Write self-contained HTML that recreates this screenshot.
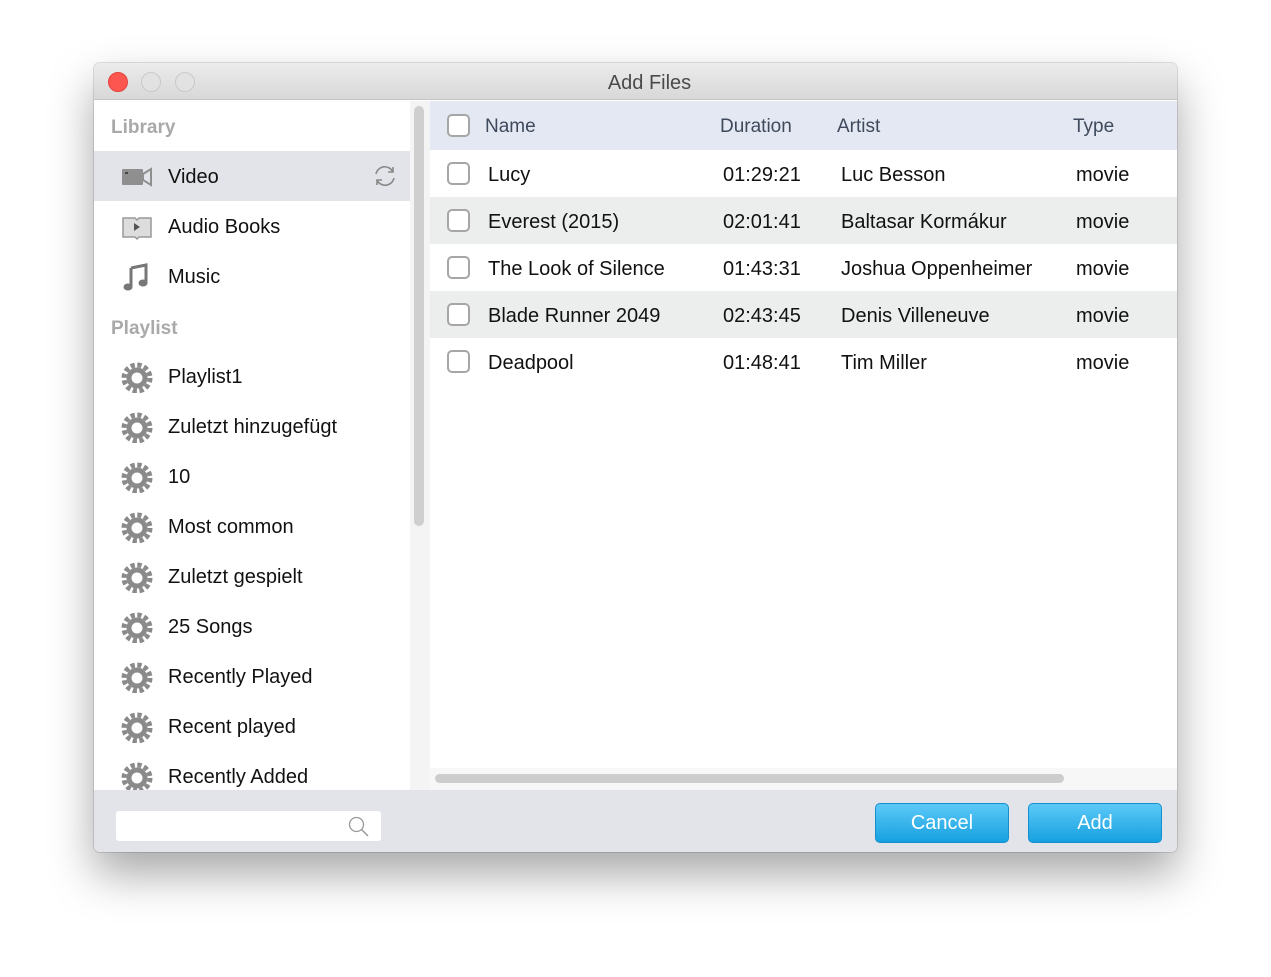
<!DOCTYPE html>
<html><head><style>
*{margin:0;padding:0;box-sizing:border-box}
body{width:1271px;height:977px;background:#fff;font-family:"Liberation Sans",sans-serif;position:relative;overflow:hidden}
.win{position:absolute;left:94px;top:63px;width:1083px;height:789px;border-radius:6px;background:#fff;box-shadow:0 22px 45px rgba(0,0,0,.35),0 0 0 1px rgba(0,0,0,.12);overflow:hidden}
.title{position:absolute;left:0;top:0;width:100%;height:37px;background:linear-gradient(#ececec,#d8d8d8);border-bottom:1px solid #c4c4c4;text-align:center;font-size:20px;line-height:40px;color:#4a4a4a;padding-left:28px}
.dot{position:absolute;top:9px;width:20px;height:20px;border-radius:50%;border:1px solid #c9c9c9;background:#e2e2e2}
.side{position:absolute;left:0;top:38px;width:316px;height:689px;background:#fff}
.sh{position:absolute;left:17px;font-size:19px;font-weight:bold;color:#a9a9a9}
.it{position:absolute;left:0;width:316px;height:50px;font-size:20px;color:#111}
.it span{position:absolute;left:74px;top:15px}
.it svg{position:absolute;left:27px;top:10px}
.sb{position:absolute;left:316px;top:38px;width:20px;height:689px;background:#f4f4f4}
.thumb{position:absolute;left:320px;top:43px;width:10px;height:420px;border-radius:5px;background:#cfcfcf}
.hd{position:absolute;left:336px;top:38px;width:747px;height:49px;background:#e4e8f2;font-size:19px;color:#3e4a5c}
.row{position:absolute;left:336px;width:747px;height:47px;font-size:20px;color:#111}
.cb{position:absolute;left:17px;width:23px;height:23px;border:2px solid #a6a6a6;border-radius:5px;background:#fff}
.c{position:absolute;top:14px}
.hd .c{top:15px}
.bot{position:absolute;left:0;top:727px;width:100%;height:62px;background:#e3e4e9}
.hs{position:absolute;left:341px;top:711px;width:629px;height:9px;border-radius:5px;background:#cdcdcd}
.btn{position:absolute;top:13px;width:134px;height:40px;border-radius:5px;background:linear-gradient(#5cc9f7,#16a0e0);border:1px solid #1590cc;color:#fff;font-size:20px;text-align:center;line-height:39px}
</style></head><body>
<div class="win">
<div class="title">Add Files
<div class="dot" style="left:14px;background:#fd5650;border-color:#e0443e"></div>
<div class="dot" style="left:47px"></div>
<div class="dot" style="left:81px"></div>
</div>
<div class="side">
<div class="sh" style="top:16px">Library</div>
<div class="it" style="top:50px;background:#e3e4e9"><svg width="32" height="32" viewBox="0 0 32 32"><rect x="1" y="8" width="21" height="16" rx="1" fill="#8f8f8f"/><rect x="4" y="11" width="3" height="2" fill="#444"/><path d="M22 13 L30 8 V24 L22 19Z" fill="none" stroke="#8f8f8f" stroke-width="2"/></svg><span>Video</span>
<svg style="left:279px;top:14px" width="24" height="22" viewBox="0 0 24 22"><path d="M3 9 A9 9 0 0 1 20 7 M21 13 A9 9 0 0 1 4 15" fill="none" stroke="#888" stroke-width="1.6"/><path d="M20 2 V7 H15 M4 20 V15 H9" fill="none" stroke="#888" stroke-width="1.6"/></svg></div>
<div class="it" style="top:100px"><svg width="32" height="32" viewBox="0 0 32 32"><path d="M2 7 H14 L16 9 L18 7 H30 V26 H18 L16 28 L14 26 H2Z" fill="#ddd" stroke="#999" stroke-width="1.5"/><path d="M13 12 L19 16 L13 20Z" fill="#555"/></svg><span>Audio Books</span></div>
<div class="it" style="top:150px"><svg width="32" height="32" viewBox="0 0 32 32"><path d="M10 7 L25 4 V22" fill="none" stroke="#777" stroke-width="3"/><path d="M10 7 V26" stroke="#777" stroke-width="3"/><ellipse cx="7" cy="26" rx="4.5" ry="3.5" fill="#777"/><ellipse cx="22" cy="22" rx="4.5" ry="3.5" fill="#777"/></svg><span>Music</span></div>
<div class="sh" style="top:217px">Playlist</div>
</div>
<div id="pl"></div>
<div class="sb"></div><div class="thumb"></div>
<div class="hd"><div class="cb" style="top:13px"></div><div class="c" style="left:55px">Name</div><div class="c" style="left:290px">Duration</div><div class="c" style="left:407px">Artist</div><div class="c" style="left:643px">Type</div></div>
<div class="row" style="top:87px;background:#fff"><div class="cb" style="top:12px"></div><div class="c" style="left:58px">Lucy</div><div class="c" style="left:293px">01:29:21</div><div class="c" style="left:411px">Luc Besson</div><div class="c" style="left:646px">movie</div></div>
<div class="row" style="top:134px;background:#eceeee"><div class="cb" style="top:12px"></div><div class="c" style="left:58px">Everest (2015)</div><div class="c" style="left:293px">02:01:41</div><div class="c" style="left:411px">Baltasar Kormákur</div><div class="c" style="left:646px">movie</div></div>
<div class="row" style="top:181px;background:#fff"><div class="cb" style="top:12px"></div><div class="c" style="left:58px">The Look of Silence</div><div class="c" style="left:293px">01:43:31</div><div class="c" style="left:411px">Joshua Oppenheimer</div><div class="c" style="left:646px">movie</div></div>
<div class="row" style="top:228px;background:#eceeee"><div class="cb" style="top:12px"></div><div class="c" style="left:58px">Blade Runner 2049</div><div class="c" style="left:293px">02:43:45</div><div class="c" style="left:411px">Denis Villeneuve</div><div class="c" style="left:646px">movie</div></div>
<div class="row" style="top:275px;background:#fff"><div class="cb" style="top:12px"></div><div class="c" style="left:58px">Deadpool</div><div class="c" style="left:293px">01:48:41</div><div class="c" style="left:411px">Tim Miller</div><div class="c" style="left:646px">movie</div></div>
<div style="position:absolute;left:336px;top:705px;width:747px;height:22px;background:#f7f7f7"></div>
<div class="hs"></div>
<div class="bot">
<div style="position:absolute;left:22px;top:21px;width:265px;height:30px;background:#fff;border-radius:3px"></div>
<svg style="position:absolute;left:254px;top:26px" width="22" height="22" viewBox="0 0 22 22"><circle cx="8.5" cy="8.5" r="7" fill="none" stroke="#999" stroke-width="1.3"/><path d="M13.5 13.5 L20 20" stroke="#999" stroke-width="1.5"/></svg>
<div class="btn" style="left:781px">Cancel</div>
<div class="btn" style="left:934px">Add</div>
</div>
</div>
<script>
var n=["Playlist1","Zuletzt hinzugefügt","10","Most common","Zuletzt gespielt","25 Songs","Recently Played","Recent played","Recently Added"];
var h="";
n.forEach(function(t,i){var top=38+250+i*50;
h+='<div class="it" style="top:'+top+'px;height:'+(i==8?Math.min(50,727-top):50)+'px;overflow:hidden"><svg width="32" height="32" viewBox="0 0 32 32"><circle cx="16" cy="17" r="10.5" fill="#8a8a8a"/><circle cx="16" cy="17" r="13" fill="none" stroke="#8a8a8a" stroke-width="5" stroke-dasharray="4.2 2.6"/><circle cx="16" cy="17" r="5.5" fill="#fff"/></svg><span>'+t+'</span></div>';});
document.getElementById("pl").innerHTML=h;
</script>
</body></html>
